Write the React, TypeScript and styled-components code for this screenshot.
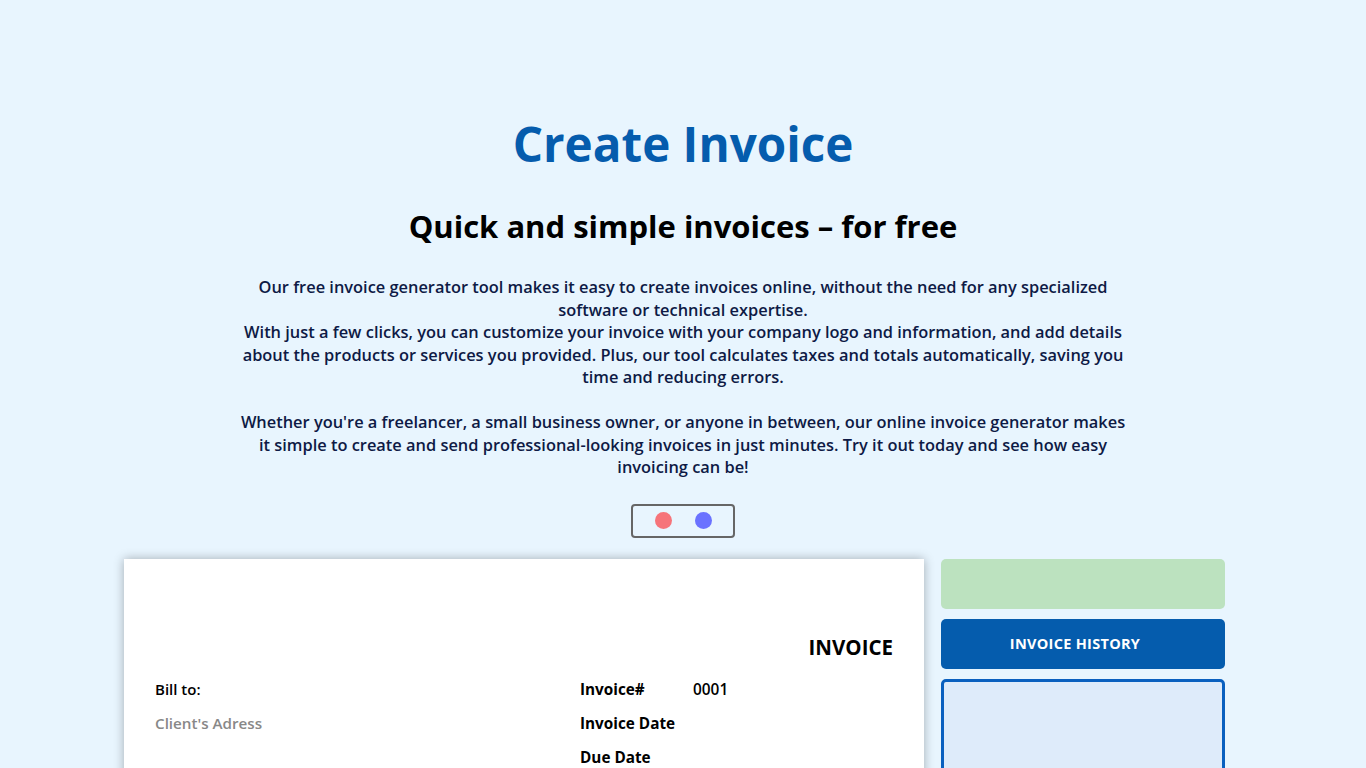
import React, { useState } from 'react';
import styled, { createGlobalStyle } from 'styled-components';

const GlobalStyle = createGlobalStyle`
  body {
    margin: 0;
    background: #e8f5fe;
    font-family: 'Open Sans', 'Noto Sans', sans-serif;
  }
`;

const App = () => {
  const [theme, setTheme] = useState<'red' | 'blue'>('red');

  return (
    <>
      <GlobalStyle />
      <Page>
        <Title>Create Invoice</Title>
        <Subtitle>Quick and simple invoices – for free</Subtitle>
        <Intro>
          Our free invoice generator tool makes it easy to create invoices online, without the need for any
          specialized software or technical expertise.
          <br />
          With just a few clicks, you can customize your invoice with your company logo and information, and add
          details about the products or services you provided. Plus, our tool calculates taxes and totals
          automatically, saving you time and reducing errors.
          <br />
          <br />
          Whether you're a freelancer, a small business owner, or anyone in between, our online invoice generator
          makes it simple to create and send professional-looking invoices in just minutes. Try it out today and see
          how easy invoicing can be!
        </Intro>
        <ColorToggle>
          <Dot color="#f6747a" onClick={() => setTheme('red')} aria-label="red" />
          <Dot color="#6a72ff" onClick={() => setTheme('blue')} aria-label="blue" />
        </ColorToggle>
        <Workspace data-theme={theme}>
          <InvoiceCard>
            <InvoiceHeading>INVOICE</InvoiceHeading>
            <DetailsRow>
              <BillTo>
                <Label>Bill to:</Label>
                <Placeholder>Client's Adress</Placeholder>
              </BillTo>
              <MetaTable>
                <MetaLabel>Invoice#</MetaLabel>
                <Value>0001</Value>
                <MetaLabel>Invoice Date</MetaLabel>
                <Value />
                <MetaLabel>Due Date</MetaLabel>
                <Value />
              </MetaTable>
            </DetailsRow>
          </InvoiceCard>
          <Sidebar>
            <SaveBox />
            <HistoryButton>INVOICE HISTORY</HistoryButton>
            <HistoryPanel />
          </Sidebar>
        </Workspace>
      </Page>
    </>
  );
};

const Page = styled.div`
  display: flex;
  flex-direction: column;
  align-items: center;
  padding-top: 111px;
`;
const Title = styled.h1`
  margin: 0;
  font-size: 47.6px;
  line-height: 66px;
  font-weight: 700;
  color: #055cad;
`;
const Subtitle = styled.h2`
  margin: 28px 0 0;
  font-size: 31px;
  line-height: 42px;
  font-weight: 700;
  color: #000;
`;
const Intro = styled.p`
  margin: 29px 0 0;
  max-width: 892px;
  text-align: center;
  font-size: 16.4px;
  line-height: 22.5px;
  font-weight: 600;
  color: #0e1a45;
`;
const ColorToggle = styled.div`
  margin-top: 25px;
  width: 100px;
  height: 30px;
  border: 2px solid #666;
  border-radius: 4px;
  display: flex;
  justify-content: center;
  align-items: center;
  gap: 23px;
`;
const Dot = styled.button<{ color: string }>`
  width: 17px;
  height: 17px;
  padding: 0;
  border: none;
  border-radius: 50%;
  background: ${(p) => p.color};
  cursor: pointer;
`;
const Workspace = styled.div`
  margin-top: 21px;
  width: 1118px;
  display: flex;
  align-items: flex-start;
  gap: 17px;
`;
const InvoiceCard = styled.div`
  width: 800px;
  min-height: 600px;
  box-sizing: border-box;
  padding: 74px 31px 40px;
  background: #fff;
  box-shadow: 0 0 10px rgba(0, 0, 0, 0.3);
  display: flex;
  flex-direction: column;
`;
const InvoiceHeading = styled.div`
  align-self: flex-end;
  font-size: 20.5px;
  line-height: 28px;
  font-weight: 700;
  color: #000;
`;
const DetailsRow = styled.div`
  margin-top: 18px;
  display: flex;
  justify-content: space-between;
`;
const BillTo = styled.div`
  display: flex;
  flex-direction: column;
  gap: 13px;
`;
const Label = styled.div`
  font-size: 15px;
  line-height: 21px;
  font-weight: 600;
  color: #000;
`;
const MetaLabel = styled(Label)`
  font-size: 15.3px;
  font-weight: 700;
`;
const Placeholder = styled(Label)`
  font-size: 15.2px;
  color: #888;
`;
const MetaTable = styled.div`
  width: 313px;
  display: grid;
  grid-template-columns: 113px 1fr;
  row-gap: 13px;
`;
const Value = styled.div`
  min-height: 21px;
  font-size: 15.4px;
  line-height: 21px;
  font-weight: 600;
  color: #000;
`;
const Sidebar = styled.div`
  width: 284px;
  display: flex;
  flex-direction: column;
  gap: 10px;
`;
const SaveBox = styled.div`
  height: 50px;
  border-radius: 5px;
  background: #bce2bf;
`;
const HistoryButton = styled.button`
  height: 50px;
  padding: 0 16px 0 0;
  border: none;
  border-radius: 5px;
  background: #055cad;
  color: #fff;
  font-family: inherit;
  font-size: 14.5px;
  font-weight: 700;
  letter-spacing: 0.3px;
  cursor: pointer;
`;
const HistoryPanel = styled.div`
  height: 300px;
  box-sizing: border-box;
  border: 3px solid #0a60bf;
  border-radius: 5px;
  background: #deebfa;
`;

export default App;
